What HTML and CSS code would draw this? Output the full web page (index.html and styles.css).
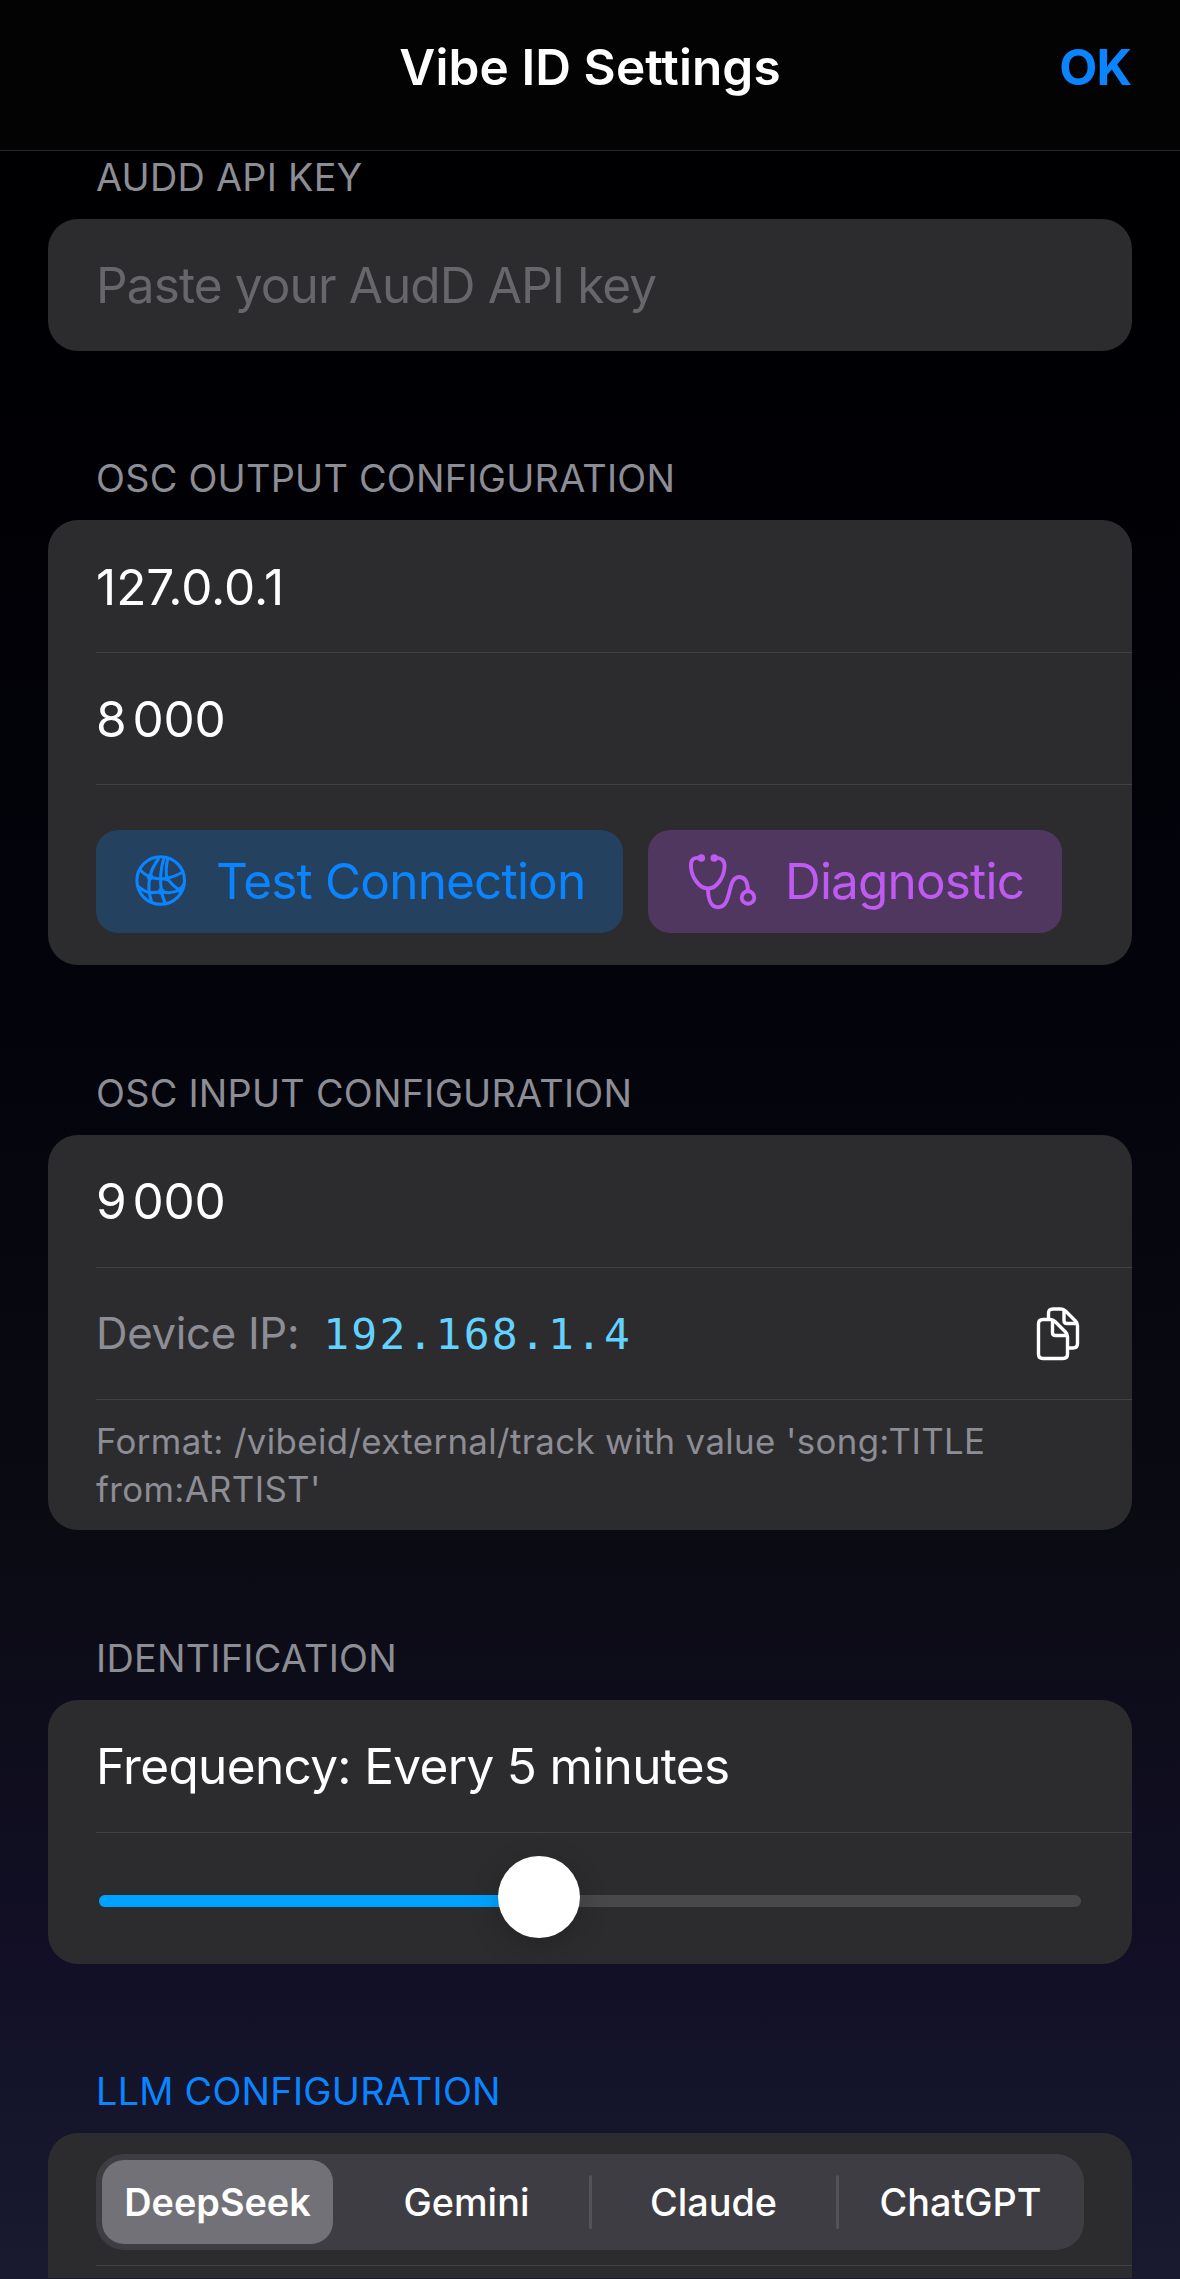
FILE: index.html
```
<!DOCTYPE html>
<html lang="en">
<head>
<meta charset="utf-8">
<title>Vibe ID Settings</title>
<link rel="stylesheet" href="styles.css">
</head>
<body>
<header class="navbar">
  <h1 class="navbar-title">Vibe ID Settings</h1>
  <button class="navbar-done">OK</button>
</header>
<main class="form">
  <section class="section">
    <h2 class="label">AUDD API KEY</h2>
    <div class="card">
      <div class="row"><span class="placeholder">Paste your AudD API key</span></div>
    </div>
  </section>

  <section class="section">
    <h2 class="label">OSC OUTPUT CONFIGURATION</h2>
    <div class="card">
      <div class="row"><span>127.0.0.1</span></div>
      <div class="row"><span class="port">8<span class="thin"></span>000</span></div>
      <div class="row row-actions">
        <button class="action action-blue">
          <svg class="globe" viewBox="0 0 52 52" fill="none" stroke="currentColor" stroke-width="3.1">
            <circle cx="25.700" cy="25.500" r="23.800"/>
            <path d="M5 15Q10 20 15 22Q24 25 32 23.500Q40 21.500 47 17.500M15 22Q16 14 24 3M26.300 36.500Q24 18 29 3M32 23.500Q30 14 33 3M15 22Q12 34 16.700 47M3 31Q8 36 14.300 37.500Q20 38 26.300 36.500Q36 39.500 44 35Q47 33 49 29M32 23.500Q38 31 44 35M26.300 36.500Q28 43 30 48"/>
            <g fill="currentColor" stroke="none">
              <circle cx="15" cy="22" r="3.200"/>
              <circle cx="32" cy="23.500" r="2.800"/>
              <circle cx="26.300" cy="36.500" r="3.300"/>
              <circle cx="44.500" cy="35" r="2.800"/>
            </g>
          </svg>
          <span>Test Connection</span>
        </button>
        <button class="action action-purple">
          <svg class="stetho" viewBox="0 0 70 58" fill="none" stroke="currentColor" stroke-width="3.900" stroke-linecap="round">
            <path d="M12 6C4 5 2.500 9 3 15C3.500 25 11 36.500 20 36.500C29 36.500 36 25 36.500 15C37 9 34 5 26 6M20 36.500C20 47 23 55.200 30 55.200C45 55.200 38 25 51.500 25C57 25 59.500 30 60 38"/>
            <circle cx="60" cy="45.500" r="6.300"/>
            <g fill="currentColor" stroke="none">
              <circle cx="13.300" cy="6" r="3.800"/>
              <circle cx="26.300" cy="6" r="3.800"/>
            </g>
          </svg>
          <span>Diagnostic</span>
        </button>
      </div>
    </div>
  </section>

  <section class="section">
    <h2 class="label">OSC INPUT CONFIGURATION</h2>
    <div class="card">
      <div class="row"><span class="port">9<span class="thin"></span>000</span></div>
      <div class="row row-device">
        <span class="device">Device IP:</span>
        <span class="ip">192.168.1.4</span>
        <svg class="copy" viewBox="0 0 44 54" fill="none" stroke="currentColor" stroke-width="3.400" stroke-linejoin="round">
          <path d="M12.500 11V6.500Q12.500 2 17 2H25Q27.500 2 29.500 4L39.500 14Q41.500 16 41.500 18.500V36.500Q41.500 41 37 41H33M28 3V13.500Q28 16.500 31 16.500H41"/>
          <path d="M2.500 17Q2.500 12.500 7 12.500H14.500Q17 12.500 19 14.500L29.500 25Q31.500 27 31.500 29.500V47Q31.500 51.500 27 51.500H7Q2.500 51.500 2.500 47ZM16.500 14V25.500Q16.500 28.500 19.500 28.500H31"/>
        </svg>
      </div>
      <div class="row row-note">Format: /vibeid/external/track with value 'song:TITLE from:ARTIST'</div>
    </div>
  </section>

  <section class="section">
    <h2 class="label">IDENTIFICATION</h2>
    <div class="card">
      <div class="row"><span class="frequency">Frequency: Every 5 minutes</span></div>
      <div class="row row-slider">
        <div class="track"><div class="fill"></div><div class="thumb"></div></div>
      </div>
    </div>
  </section>

  <section class="section">
    <h2 class="label label-link">LLM CONFIGURATION</h2>
    <div class="card card-cut">
      <div class="row row-segments">
        <div class="segments">
          <button class="segment selected">DeepSeek</button>
          <button class="segment">Gemini</button>
          <button class="segment divided">Claude</button>
          <button class="segment divided">ChatGPT</button>
        </div>
      </div>
      <div class="row row-next"></div>
    </div>
  </section>
</main>
</body>
</html>
```
FILE: styles.css
```
* { box-sizing: border-box; }
html, body { margin: 0; height: 2279px; overflow: hidden; }
body {
  font-family: Inter, "Liberation Sans", sans-serif;
  font-size: 49.5px;
  color: #fff;
  background: linear-gradient(#000 0, #000004 400px, #03030c 1000px, #0b0b14 1560px, #120f26 1960px, #13132a 2060px, #191930 2279px);
}
button { border: 0; padding: 0; margin: 0; background: none; color: inherit; font: inherit; }
h1, h2 { margin: 0; }

.navbar {
  display: grid;
  grid-template-columns: 1fr auto 1fr;
  align-items: center;
  height: 151px;
  padding: 0 49px 17px;
  background: #030303;
  border-bottom: 1px solid #262628;
}
.navbar-title { grid-column: 2; font-size: 49.5px; font-weight: 600; letter-spacing: 0.1px; }
.navbar-done { justify-self: end; padding-top: 1px; color: #0a84ff; font-weight: 700; letter-spacing: -1px; }

.form { height: 2128px; padding: 2px 48px 0; overflow: hidden; }
.section { margin-bottom: 103.6px; }
.section:last-child { margin-bottom: 0; }
.label {
  padding: 0 48px 18px;
  line-height: 48px;
  font-size: 37.8px;
  font-weight: 400;
  letter-spacing: 0.26px;
  color: #8d8d95;
}
.label-link { color: #0a84ff; }

.card { background: #2c2c2e; border-radius: 30px; overflow: hidden; }
.card-cut { height: 145px; border-radius: 30px 30px 0 0; }
.row {
  display: flex;
  align-items: center;
  height: 131.8px;
  margin-left: 48px;
  padding: 1px 48px 0 0;
  white-space: nowrap;
}
.row + .row { border-top: 1px solid #414144; }
.placeholder { letter-spacing: -0.88px; color: #66666b; }
.frequency { letter-spacing: -0.66px; }
.port { letter-spacing: -0.2px; }
.thin { display: inline-block; width: 6px; }

.row-actions { height: 181.4px; gap: 25px; padding-top: 12px; }
.action {
  display: flex;
  align-items: center;
  height: 103px;
  border-radius: 22px;
  letter-spacing: -0.83px;
}
.action-blue { width: 527px; padding-left: 39px; gap: 29px; color: #0a84ff; background: #24415f; }
.action-purple { width: 414px; padding-left: 40px; gap: 27px; color: #bf5af2; background: #50375f; }
.globe { width: 52px; height: 52px; }
.stetho { width: 70px; height: 58px; }

.row-device { font-size: 43.7px; }
.device { letter-spacing: -0.3px; color: #8d8d95; }
.ip { margin-left: 24px; font-family: "DejaVu Sans Mono", monospace; font-size: 43px; letter-spacing: 2.2px; color: #64d2ff; }
.copy { width: 44px; height: 54px; margin-left: auto; margin-right: 4px; }
.row-note { font-size: 34.8px; line-height: 48px; letter-spacing: 0.38px; white-space: normal; color: #8d8d95; }

.row-slider { padding: 0 51px 0 0; }
.track {
  position: relative;
  flex: 1;
  height: 12px;
  margin: 5px 0 0 3px;
  border-radius: 6px;
  background: #48484b;
}
.fill { width: 430px; height: 12px; border-radius: 6px; background: #00a2ff; }
.thumb {
  position: absolute;
  left: 399px;
  top: -39px;
  width: 82px;
  height: 82px;
  border-radius: 50%;
  background: #fff;
  box-shadow: 0 8px 30px rgba(0, 0, 0, .2);
}

.row-segments { padding-top: 5px; }
.segments {
  display: grid;
  grid-template-columns: repeat(4, 1fr);
  width: 988px;
  height: 96px;
  padding: 6px 0;
  border-radius: 28px;
  background: #3e3d43;
}
.segment { position: relative; font-size: 37.8px; font-weight: 500; border-radius: 22px; }
.selected { margin: 0 10px 0 6px; background: #727177; font-weight: 600; }
.divided::before {
  content: "";
  position: absolute;
  left: -1px;
  top: 15px;
  width: 3px;
  height: 54px;
  border-radius: 2px;
  background: #545359;
}
```
